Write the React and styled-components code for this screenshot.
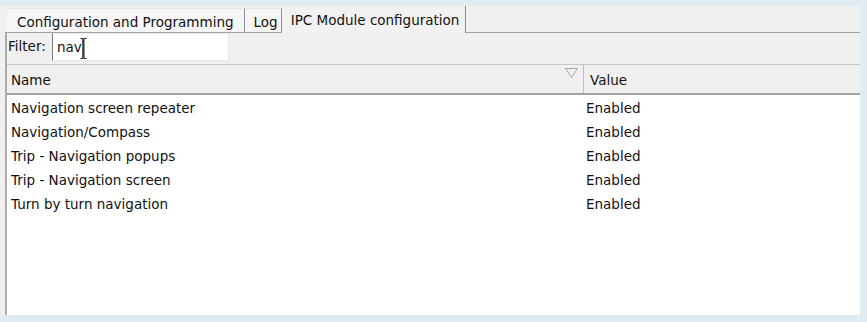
import styled, { createGlobalStyle } from "styled-components";

const rows = [
  { name: "Navigation screen repeater", value: "Enabled" },
  { name: "Navigation/Compass", value: "Enabled" },
  { name: "Trip - Navigation popups", value: "Enabled" },
  { name: "Trip - Navigation screen", value: "Enabled" },
  { name: "Turn by turn navigation", value: "Enabled" },
];

const GlobalStyle = createGlobalStyle`
  html, body {
    margin: 0;
    padding: 0;
    background: #e0ebf2;
    font-family: "DejaVu Sans", Verdana, sans-serif;
    font-size: 13.5px;
    color: #111;
  }
`;

export default function App() {
  return (
    <>
      <GlobalStyle />
      <Screen>
        <Panel>
          <TabBar>
            <Tab $padL={10} $padR={10}>Configuration and Programming</Tab>
            <Tab $padL={9} $padR={3}>Log</Tab>
            <ActiveTab>IPC Module configuration</ActiveTab>
            <TabFiller />
          </TabBar>
          <Pane>
            <FilterRow>
              <FilterLabel>Filter:</FilterLabel>
              <FilterInput>
                nav
                <Caret viewBox="0 0 7 21" width="7" height="21">
                  <path d="M0.5 0.5h2.5v20h-2.5M6.5 0.5h-2.5v20h2.5M3 1v19" stroke="#222" strokeWidth="1" fill="none" />
                </Caret>
              </FilterInput>
            </FilterRow>
            <Table>
              <HeaderRow>
                <NameHead>
                  Name
                  <SortMark viewBox="0 0 13 10" width="13" height="10">
                    <path d="M0.5 0.5h12L6.5 9.5z" stroke="#a8a8a8" strokeWidth="1" fill="none" />
                  </SortMark>
                </NameHead>
                <ValueHead>Value</ValueHead>
              </HeaderRow>
              <Body>
                {rows.map((r) => (
                  <Row key={r.name}>
                    <NameCell>{r.name}</NameCell>
                    <ValueCell>{r.value}</ValueCell>
                  </Row>
                ))}
              </Body>
            </Table>
          </Pane>
        </Panel>
      </Screen>
    </>
  );
}

const Screen = styled.div`
  padding: 6px 7px 7px 0;
  width: 860px;
`;

const Panel = styled.div`
  display: flex;
  flex-direction: column;
  width: 860px;
  height: 309px;
  background: #f0f0f0;
`;

const TabBar = styled.div`
  display: flex;
  align-items: flex-end;
  height: 26px;
  margin-left: 5px;
  padding-left: 2px;
  border-bottom: 1px solid #a3a3a3;
`;

const Tab = styled.div`
  display: flex;
  align-items: center;
  box-sizing: border-box;
  height: 24px;
  padding: 3px ${(p) => p.$padR}px 0 ${(p) => p.$padL}px;
  background: #f6f6f6;
  border-top: 1px solid #e6e6e6;
  border-right: 1px solid #8f8f8f;
  border-top-left-radius: 3px;
  white-space: nowrap;
`;

const ActiveTab = styled.div`
  height: 27px;
  margin-bottom: -1px;
  box-sizing: border-box;
  display: flex;
  align-items: center;
  padding: 1px 6px 0 9px;
  background: #f1f1f1;
  border-right: 1px solid #8a8a8a;
  white-space: nowrap;
`;

const TabFiller = styled.div`
  flex: 1;
`;

const Pane = styled.div`
  flex: 1;
  display: flex;
  flex-direction: column;
  margin-left: 5px;
  border-left: 2px solid #adadad;
  min-height: 0;
`;

const FilterRow = styled.div`
  display: flex;
  align-items: flex-start;
  height: 31px;
`;

const FilterLabel = styled.span`
  padding: 5px 0 0 1px;
  width: 44px;
`;

const FilterInput = styled.div`
  display: flex;
  align-items: center;
  box-sizing: border-box;
  width: 177px;
  height: 28px;
  padding-left: 4px;
  background: #fff;
  border: 1px solid;
  border-color: #ececec #e6e6e6 #e6e6e6 #7a7a7a;
`;

const Caret = styled.svg`
  margin-left: -2px;
  margin-top: 2px;
`;

const Table = styled.div`
  flex: 1;
  background: #fff;
`;

const HeaderRow = styled.div`
  display: flex;
  height: 28px;
  background: #f0f0f0;
  border-top: 1px solid #c8c8c8;
  border-bottom: 2px solid #a2a2a2;
`;

const NameHead = styled.div`
  position: relative;
  width: 577px;
  padding: 1px 0 0 4px;
  box-sizing: border-box;
  display: flex;
  align-items: center;
  border-right: 1px solid #bdbdbd;
`;

const SortMark = styled.svg`
  position: absolute;
  right: 5px;
  top: 3px;
`;

const ValueHead = styled.div`
  flex: 1;
  display: flex;
  align-items: center;
  padding: 1px 0 0 6px;
`;

const Body = styled.div`
  padding-top: 1px;
`;

const Row = styled.div`
  display: flex;
  align-items: center;
  height: 24px;
`;

const NameCell = styled.div`
  width: 578px;
  padding-left: 4px;
  box-sizing: border-box;
  white-space: nowrap;
`;

const ValueCell = styled.div`
  flex: 1;
  padding-left: 1px;
`;
